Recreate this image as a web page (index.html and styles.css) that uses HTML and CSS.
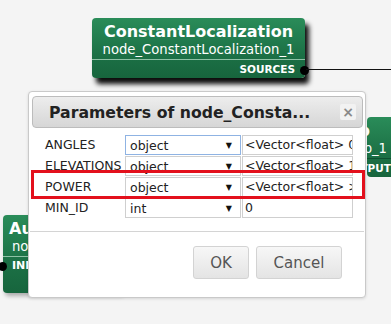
FILE: index.html
```html
<!DOCTYPE html>
<html lang="en">
  <head>
    <meta charset="UTF-8" />
    <meta name="viewport" content="width=device-width, initial-scale=1.0" />
    <title>Network editor - parameters</title>
    <link rel="stylesheet" href="styles.css">
  </head>
  <body>
    <div class="canvas">
      <!-- nodes of the network -->
      <div class="node node-main">
        <div class="node-title">ConstantLocalization</div>
        <div class="node-name">node_ConstantLocalization_1</div>
        <div class="node-port">SOURCES</div>
        <span class="port-dot dot-out"></span>
      </div>
      <div class="wire"></div>

      <div class="node node-right">
        <div class="node-title"><span>MatrixToMap</span></div>
        <div class="node-name"><span>node_MatrixToMap_1</span></div>
        <div class="node-port"><span>OUTPUT</span></div>
      </div>

      <div class="node node-left">
        <div class="node-title">AudioStreamFromMic</div>
        <div class="node-name">node_AudioStreamFromMic_1</div>
        <div class="node-port">INPUT</div>
        <span class="port-dot dot-in"></span>
      </div>

      <!-- parameter dialog -->
      <div class="dialog">
        <div class="dialog-title">
          <span>Parameters of node_Consta...</span>
          <span class="close">&times;</span>
        </div>

        <div class="params">
          <div class="row">
            <span class="name">ANGLES</span>
            <div class="select focused"><span>object</span><span class="arrow">&#9660;</span></div>
            <div class="value">&lt;Vector&lt;float&gt; 0 30 60 90</div>
          </div>
          <div class="row">
            <span class="name">ELEVATIONS</span>
            <div class="select"><span>object</span><span class="arrow">&#9660;</span></div>
            <div class="value">&lt;Vector&lt;float&gt; 16.7 16.7</div>
          </div>
          <div class="row">
            <span class="name">POWER</span>
            <div class="select"><span>object</span><span class="arrow">&#9660;</span></div>
            <div class="value">&lt;Vector&lt;float&gt; &gt;</div>
          </div>
          <div class="row">
            <span class="name">MIN_ID</span>
            <div class="select"><span>int</span><span class="arrow">&#9660;</span></div>
            <div class="value">0</div>
          </div>
        </div>

        <div class="dialog-foot">
          <button class="btn btn-ok">OK</button>
          <button class="btn btn-cancel">Cancel</button>
        </div>

        <!-- annotation around the POWER row -->
        <div class="highlight"></div>
      </div>
    </div>
  </body>
</html>
```

FILE: styles.css
```css
body {
  margin: 0;
  background-color: #f4f4f4;
  font-family: "DejaVu Sans", Verdana, sans-serif;
  overflow: hidden;
}

.canvas {
  position: relative;
  width: 391px;
  height: 324px;
  overflow: hidden;
}

/* nodes */
.node {
  position: absolute;
  box-sizing: border-box;
  color: #fff;
  background: linear-gradient(#2a8c59, #1c7146 60%, #17653d);
  border-radius: 4px;
  box-shadow: 4px 6px 5px rgba(0, 0, 0, 0.95);
  white-space: nowrap;
}

.node-title {
  font-weight: bold;
  font-size: 16px;
  line-height: 19px;
}

.node-name {
  font-size: 13.2px;
  line-height: 17px;
  padding-bottom: 1px;
  border-bottom: 1px solid #8fc2a6;
}

.node-port {
  font-weight: bold;
  font-size: 10.5px;
  line-height: 18px;
}

.port-dot {
  position: absolute;
  width: 9px;
  height: 9px;
  border-radius: 50%;
  background-color: #000;
}

.node-main {
  left: 92px;
  top: 18px;
  width: 213px;
  height: 60px;
  padding-top: 4px;
  text-align: center;
}

.node-main .node-port {
  text-align: right;
  padding-right: 10px;
}

.dot-out {
  right: -4px;
  top: 48px;
}

.wire {
  position: absolute;
  left: 306px;
  top: 69px;
  width: 90px;
  height: 0;
  border-top: 1.5px solid #111;
}

.node-right {
  left: 367px;
  top: 117px;
  width: 40px;
  height: 60px;
  padding-top: 4px;
  box-shadow: none;
}

.node-right .node-title,
.node-right .node-name,
.node-right .node-port {
  display: flex;
  justify-content: flex-end;
}

.node-right .node-title {
  padding-right: 37px;
}

.node-right .node-name {
  padding-right: 20px;
  border-bottom-color: #0f5131;
}

.node-right .node-port {
  padding-right: 16px;
}

.node-left {
  left: 3px;
  top: 215px;
  width: 120px;
  height: 78px;
  padding: 4px 0 0 6px;
  box-shadow: 2px 3px 4px rgba(0, 0, 0, 0.3);
}

.node-left .node-name {
  margin-left: -6px;
  padding-left: 9px;
}

.node-left .node-port {
  padding-left: 3px;
  font-size: 11px;
}

.dot-in {
  left: -5px;
  top: 47px;
}

/* dialog */
.dialog {
  position: absolute;
  left: 28px;
  top: 91px;
  width: 338px;
  height: 207px;
  box-sizing: border-box;
  padding: 4px 2px 0 3px;
  background-color: #fff;
  border: 1px solid #c9c9c9;
  border-radius: 4px;
  box-shadow: 0 1px 3px rgba(0, 0, 0, 0.12);
  color: #222;
}

.dialog-title {
  display: flex;
  align-items: center;
  justify-content: space-between;
  height: 32px;
  box-sizing: border-box;
  padding: 0 6px 0 16px;
  border: 1px solid #bcbcbc;
  border-radius: 4px;
  background: linear-gradient(#ededed, #d6d6d6);
  font-weight: bold;
  font-size: 15.7px;
  color: #222;
}

.close {
  width: 16px;
  height: 16px;
  line-height: 16px;
  text-align: center;
  font-size: 14px;
  color: #8a8a8a;
  background-color: #f2f2f2;
  border-radius: 2px;
}

.params {
  margin-top: 7px;
  padding-left: 13px;
  font-size: 12.5px;
}

.row {
  display: flex;
  height: 21px;
}

.name {
  width: 80px;
  line-height: 20px;
  white-space: nowrap;
}

.select {
  display: flex;
  justify-content: space-between;
  align-items: center;
  width: 116px;
  height: 20px;
  box-sizing: border-box;
  padding: 0 8px 0 4px;
  border: 1px solid #cfcfcf;
  background-color: #fff;
}

.select.focused {
  border-color: #8fb3e3;
}

.arrow {
  font-size: 8px;
  color: #111;
}

.value {
  width: 111px;
  height: 20px;
  box-sizing: border-box;
  margin-left: 1px;
  padding: 0 2px;
  line-height: 18px;
  border: 1px solid #cfcfcf;
  background-color: #fff;
  white-space: nowrap;
  overflow: hidden;
}

.dialog-foot {
  display: flex;
  justify-content: flex-end;
  gap: 7px;
  margin: 12px -1px 0 -2px;
  padding: 14px 22px 0 0;
  border-top: 1px solid #d4d4d4;
}

.btn {
  height: 33px;
  box-sizing: border-box;
  font-family: "DejaVu Sans", Verdana, sans-serif;
  font-size: 15px;
  color: #555;
  background: linear-gradient(#f7f7f7, #e4e4e4);
  border: 1px solid #d3d3d3;
  border-radius: 3px;
  padding: 0;
}

.btn-ok {
  width: 56px;
}

.btn-cancel {
  width: 86px;
}

.highlight {
  position: absolute;
  left: 2px;
  top: 78px;
  width: 334px;
  height: 29px;
  box-sizing: border-box;
  border: 3px solid #e3101c;
}
```
